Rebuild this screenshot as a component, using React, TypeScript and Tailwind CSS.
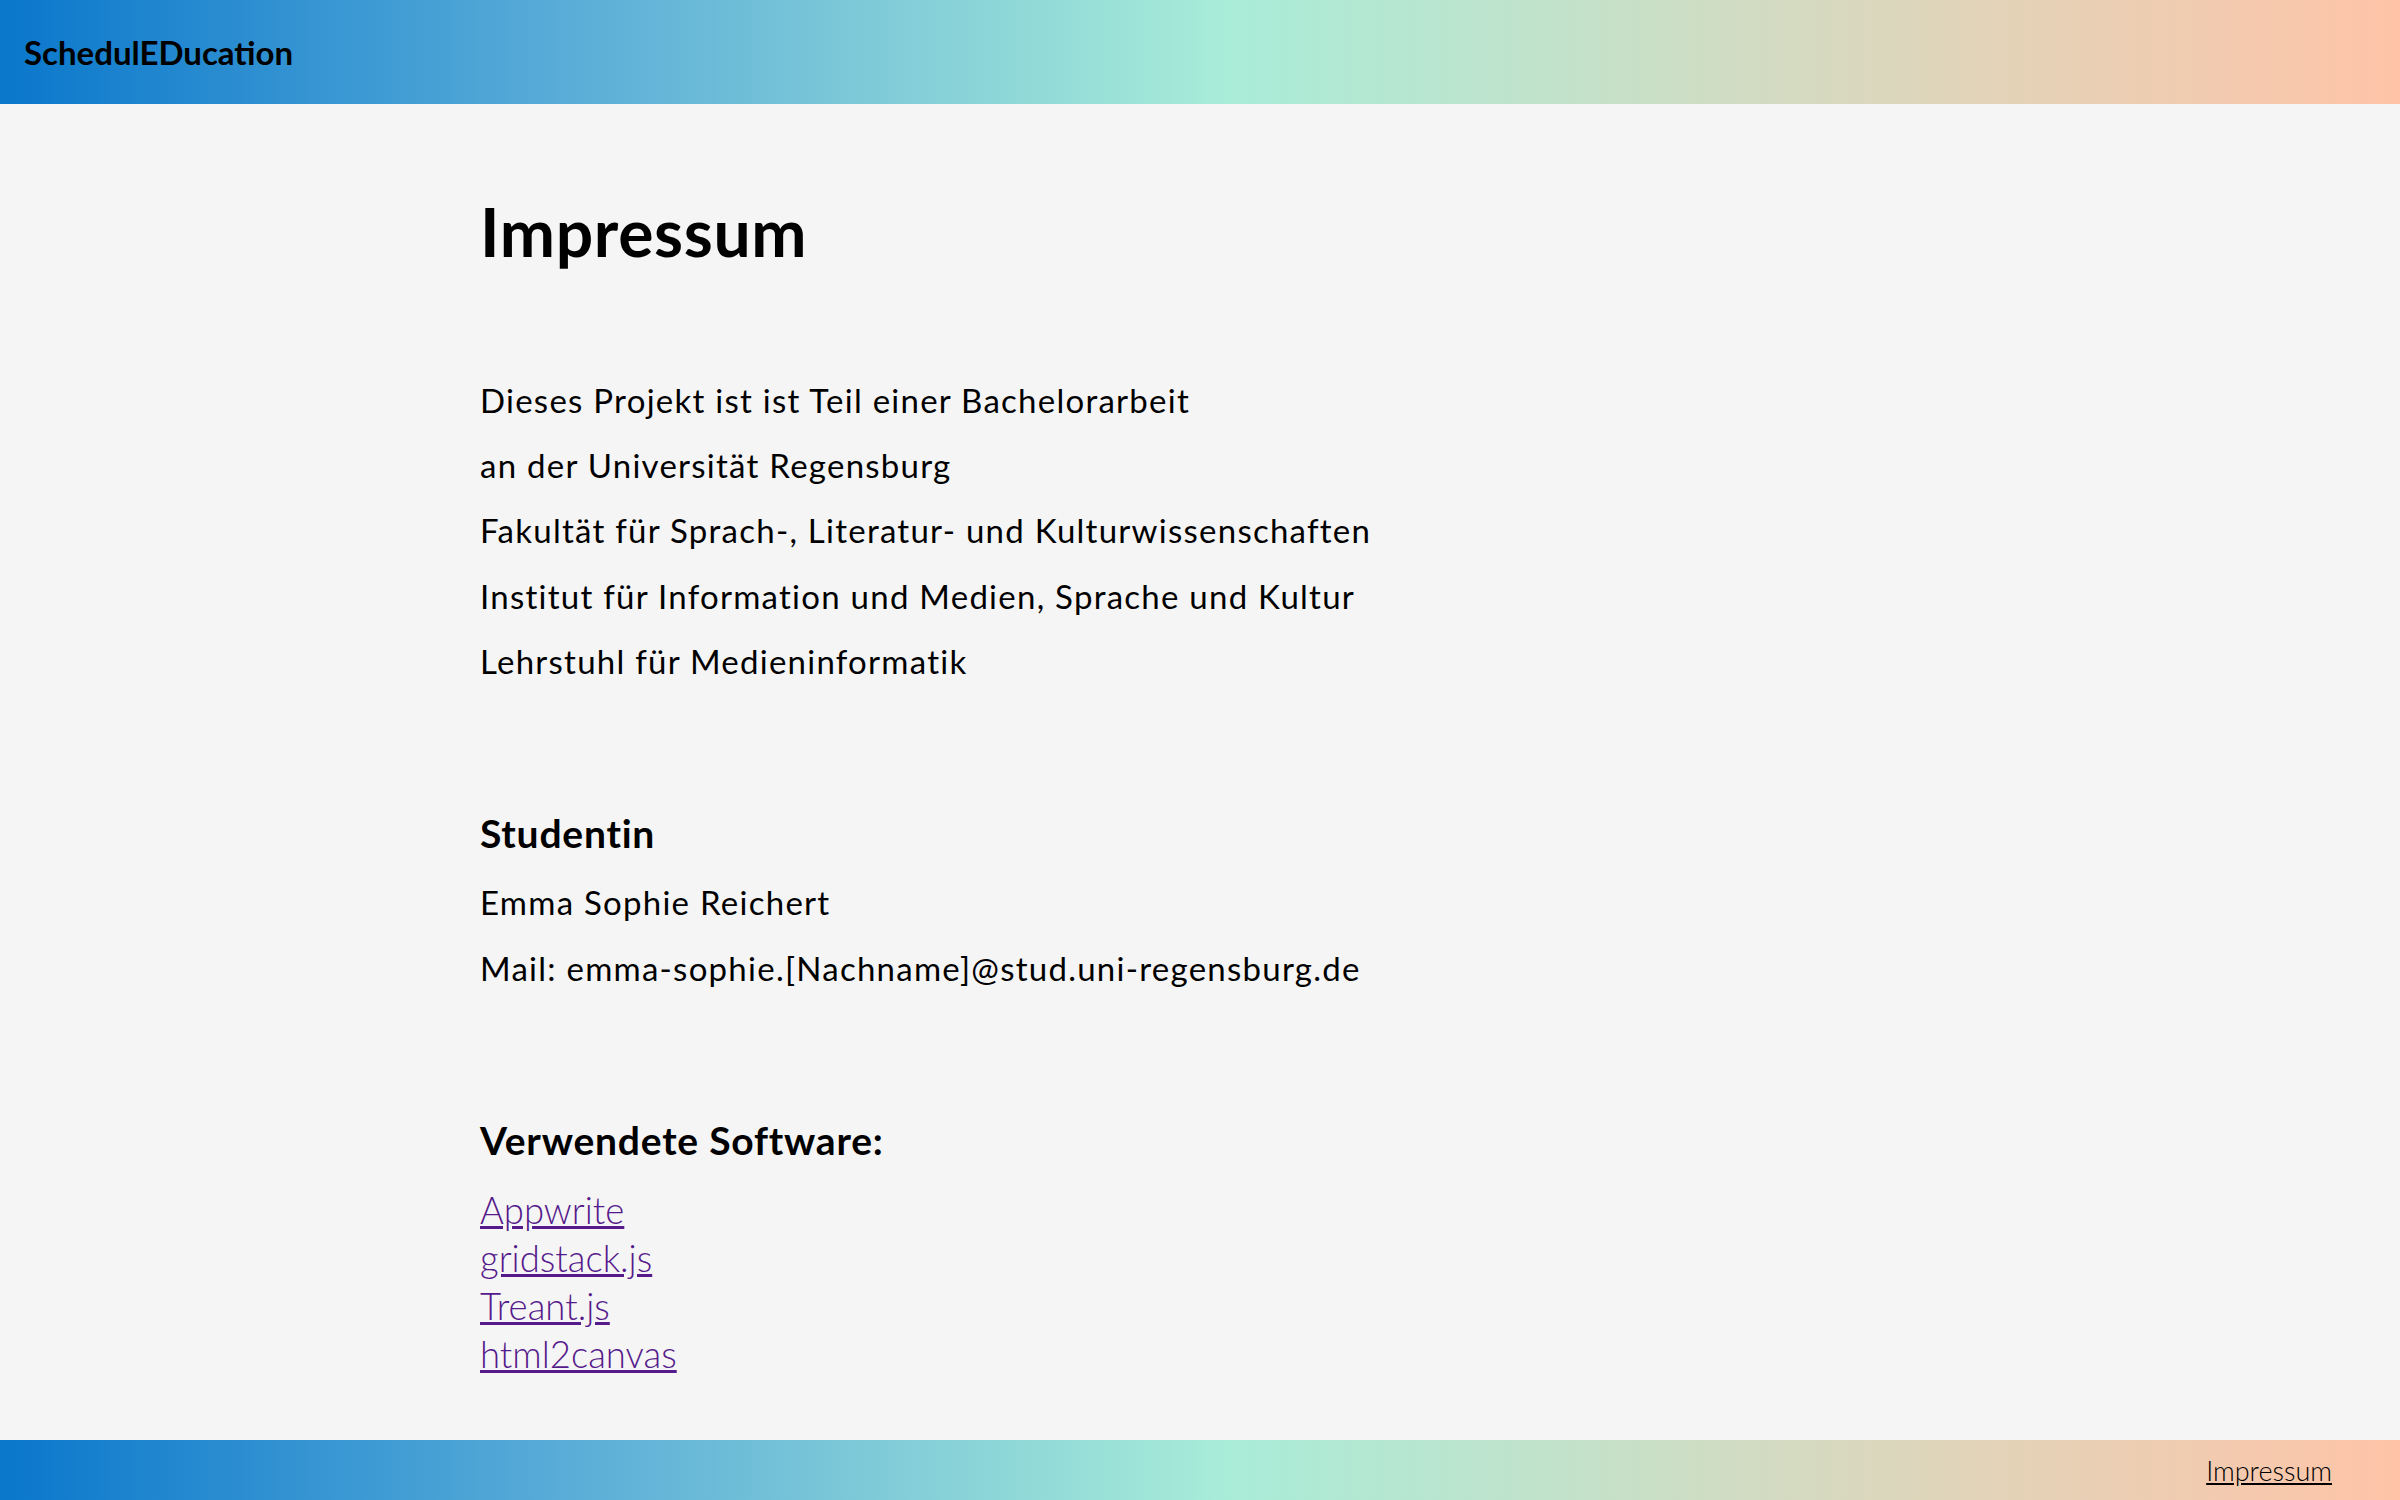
const links = [
  { name: 'Appwrite', href: 'https://appwrite.io' },
  { name: 'gridstack.js', href: 'https://gridstackjs.com' },
  { name: 'Treant.js', href: 'https://fperucic.github.io/treant-js' },
  { name: 'html2canvas', href: 'https://html2canvas.hertzen.com' },
];

const about = [
  'Dieses Projekt ist ist Teil einer Bachelorarbeit',
  'an der Universität Regensburg',
  'Fakultät für Sprach-, Literatur- und Kulturwissenschaften',
  'Institut für Information und Medien, Sprache und Kultur',
  'Lehrstuhl für Medieninformatik',
];

const barGradient =
  'bg-[linear-gradient(90deg,#0a77cc_0%,#5eb0d8_25%,#a8ecd8_51%,#d5dac0_75%,#ffc4a8_100%)]';

const App = () => {
  return (
    <div className="min-h-screen flex flex-col bg-[#f5f5f5] text-black font-['Lato',sans-serif]">
      <header className={`h-[104px] flex items-center px-[24px] ${barGradient}`}>
        <span className="text-[33px] leading-none font-bold">SchedulEDucation</span>
      </header>

      <main className="flex-1 w-3/5 mx-auto">
        <h1 className="mt-[95px] text-[66px] leading-none font-bold tracking-[0.01em]">Impressum</h1>

        <div className="mt-[103px] text-[33px] leading-[65.2px] tracking-[0.038em]">
          {about.map((line) => (
            <p key={line}>{line}</p>
          ))}
        </div>

        <h3 className="mt-[120px] text-[39px] leading-none font-bold tracking-[0.02em]">Studentin</h3>
        <div className="mt-[17px] text-[33px] leading-[65.6px] tracking-[0.038em]">
          <p>Emma Sophie Reichert</p>
          <p>Mail: emma-sophie.[Nachname]@stud.uni-regensburg.de</p>
        </div>

        <h3 className="mt-[120px] text-[39px] leading-none font-bold tracking-[0.02em]">
          Verwendete Software:
        </h3>
        <div className="mt-[26px] flex flex-col items-start text-[36.5px] leading-[48px] font-light">
          {links.map((l) => (
            <a key={l.name} href={l.href} className="text-[#551a8b] underline">
              {l.name}
            </a>
          ))}
        </div>
      </main>

      <footer className={`h-[60px] flex items-center justify-end pr-[68px] ${barGradient}`}>
        <a href="#" className="text-[27px] leading-none font-light underline text-black">
          Impressum
        </a>
      </footer>
    </div>
  );
};

export default App;
